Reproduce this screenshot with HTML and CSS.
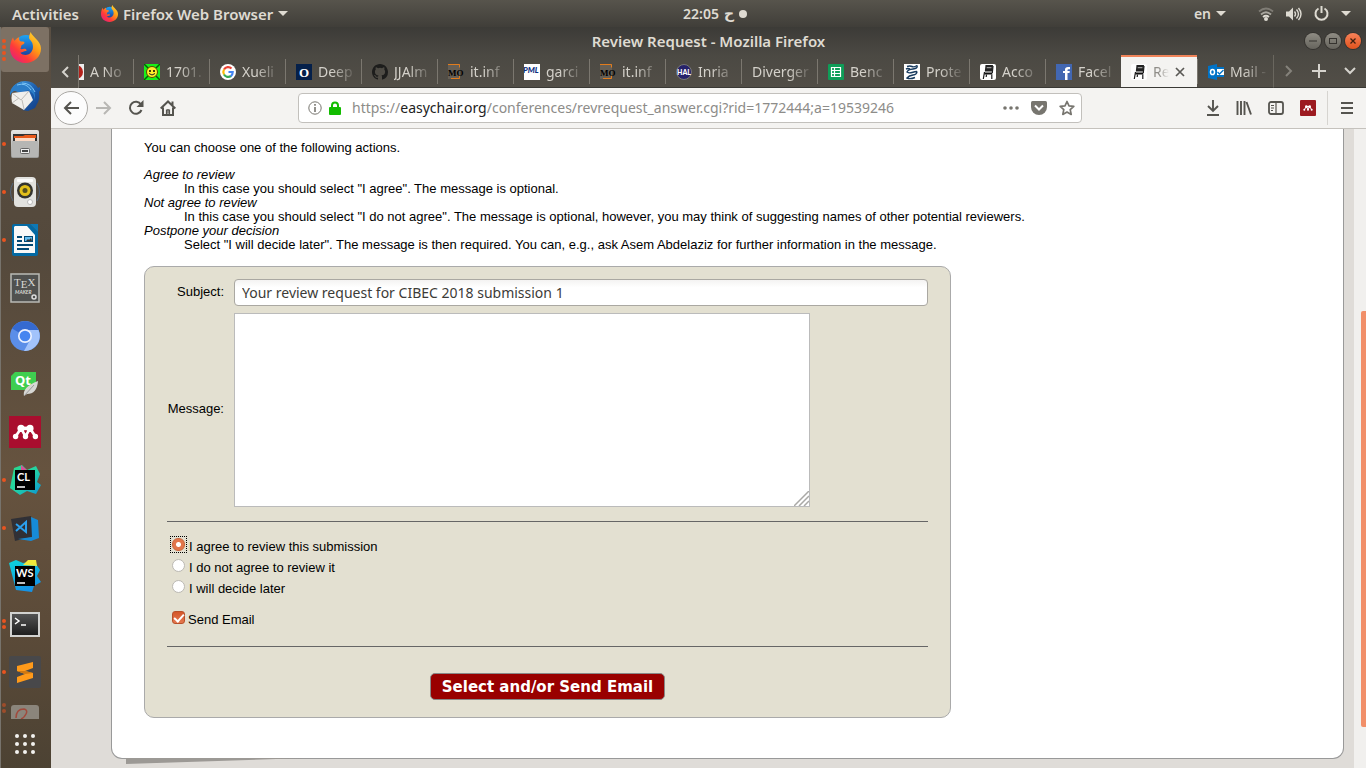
FILE: index.html
```html
<!DOCTYPE html>
<html lang="en">
<head>
<meta charset="utf-8">
<title>Review Request</title>
<link rel="stylesheet" href="styles.css">
</head>
<body>
<svg class="defs" width="0" height="0" aria-hidden="true">
  <defs>
    <linearGradient id="fxFlame" x1="1" y1="0" x2="0.1" y2="1"><stop offset="0" stop-color="#ffe83d"/><stop offset="0.4" stop-color="#ff9a14"/><stop offset="0.7" stop-color="#ff3a3a"/><stop offset="1" stop-color="#e01b84"/></linearGradient>
    <linearGradient id="fxGlobe" x1="0" y1="0" x2="0" y2="1"><stop offset="0" stop-color="#1ea4f5"/><stop offset="1" stop-color="#1a3694"/></linearGradient>
    <linearGradient id="silver" x1="0" y1="0" x2="0" y2="1"><stop offset="0" stop-color="#e6e6e4"/><stop offset="1" stop-color="#9a9a98"/></linearGradient>
    <linearGradient id="dark" x1="0" y1="0" x2="0" y2="1"><stop offset="0" stop-color="#555"/><stop offset="1" stop-color="#1c1c1c"/></linearGradient>
    <linearGradient id="clion" x1="0" y1="0" x2="1" y2="1"><stop offset="0" stop-color="#2bd98b"/><stop offset="0.5" stop-color="#22d3a4"/><stop offset="1" stop-color="#0a90d8"/></linearGradient>
    <linearGradient id="storm" x1="0" y1="0" x2="0.4" y2="1"><stop offset="0" stop-color="#0cd6da"/><stop offset="1" stop-color="#1593e6"/></linearGradient>
    <linearGradient id="bird" x1="0" y1="0" x2="1" y2="1"><stop offset="0" stop-color="#4aa6ea"/><stop offset="0.5" stop-color="#1d5fae"/><stop offset="1" stop-color="#123a80"/></linearGradient>
    <symbol id="firefox" viewBox="0 0 30 30">
      <circle cx="15.500" cy="14" r="11" fill="url(#fxGlobe)"/>
      <path d="M20 0c1 3 3 4 5.500 7 2 2 4.500 5 4.500 9 0 8-6.500 14-15 14S0 24 0 16C0 12 1 8 3 5c0 1 .5 2.500 1.500 3.500C6 6.500 7 5.500 9 5c-.5 1.500 0 3 1 4 1.500.3 3.500.3 4 1 .3 1.500-2 2.500-3 3-.5 1.500 0 2-1 3.500 2 .5 3.500-.8 5.500.2 1 .8.500 1.800-.5 1.800-1.500 0-2.500 1.500-5 1.500 2 2.500 7 3 9.500.5 3.500-3 3-7 2-10-1-2.500-3.500-3.500-3-6C18.600 3 19.500 1.500 20 0z" fill="url(#fxFlame)"/>
    </symbol>
    <symbol id="chair" viewBox="0 0 16 16"><rect width="16" height="16" rx="2" fill="#fff"/><path d="M5.500 1H13l-.7 6.500H4.800z" fill="#222"/><path d="M6.800 3h4.700l-.2 1.300H6.600zM6.400 5.300h4.700" fill="#999"/><path d="M4.300 8.500h8v2h-8z" fill="#111"/><path d="M4.500 8L3.300 15M6.500 10.500l-.3 2.500M11.800 10.500V15M13 2l-.7 7" fill="none" stroke="#1c1c1c" stroke-width="1.200"/></symbol>
    <symbol id="mo" viewBox="0 0 16 16"><rect width="12" height="15" fill="#665f55"/><path d="M0 .5h11.500v3M3 14.500h8.500v-3" fill="none" stroke="#e27c1c"/><text x="0" y="12" font-family="Liberation Serif" font-weight="bold" font-size="9">MO</text></symbol>
    <symbol id="people" viewBox="0 0 30 20"><g stroke="#fff" stroke-width="3" fill="none"><path d="M4 15l6-9 5 9 5-9 6 9"/></g><path d="M10 4h10v4H10z" fill="#fff"/><g fill="#fff"><circle cx="10" cy="6" r="4"/><circle cx="20" cy="6" r="4"/><circle cx="4" cy="15" r="3"/><circle cx="15" cy="15" r="3"/><circle cx="26" cy="15" r="3"/></g></symbol>
  </defs>
</svg>

<header class="topbar">
  <div class="topbar-left">
    <span>Activities</span>
    <span class="app-menu"><svg width="17" height="17"><use href="#firefox"/></svg>Firefox Web Browser<i class="caret"></i></span>
  </div>
  <div class="clock"><span>22:05</span><bdi>ح</bdi><i class="dot"></i></div>
  <div class="tray">
    <span class="lang">en<i class="caret"></i></span>
    <svg width="16" height="14" viewBox="0 0 16 14" fill="none"><g stroke-width="1.800"><path d="M1 4.500q7-6 14 0" stroke="#7f7c75"/><path d="M3 7.500q5-4.500 10 0" stroke="#aaa79f"/><path d="M5 10q3-2.500 6 0" stroke="#dedbd2"/></g><circle cx="8" cy="12" r="2" fill="#dedbd2"/></svg>
    <svg width="16" height="14" viewBox="0 0 16 14" fill="none" stroke="#dedbd2" stroke-width="1.400"><path d="M0 4.500h3l4-4v13l-4-4H0z" fill="#dedbd2" stroke="none"/><path d="M8.500 4.500q2 2.500 0 5M10.500 2.500q4 4.500 0 9M12.500 1q5 6 0 12"/></svg>
    <svg width="15" height="15" viewBox="0 0 15 15" fill="none" stroke="#dedbd2" stroke-width="2"><path d="M4.500 2.500a6 6 0 1 0 6 0M7.500 0v7"/></svg>
    <i class="caret"></i>
  </div>
</header>

<div class="desktop">
  <nav class="dock" aria-label="Dock">
    <button class="app current" aria-label="Firefox"><span class="runs"><i></i><i></i><i></i><i></i></span><svg width="31" height="31"><use href="#firefox"/></svg></button>
    <button class="app" aria-label="Thunderbird"><svg width="32" height="32" viewBox="0 0 32 32"><path d="M3 9Q7 1 16 1q9 0 13 7l2-1q1 3-1 5 1 8-2 12l-2 4-7 3-6-1q8-4 9-11z" fill="url(#bird)"/><path d="M3 13l17-2 4 9-9 10-12-7q-1-6 0-10z" fill="#f0efec"/><path d="M3 13l9 7 8-9M3 23l7-5M15 29l-2-9" fill="none" stroke="#bdbbb7"/><path d="M1 17Q0 8 7 4q8-4 14 1 6 5 5 15-1-8-7-10-7 2-14 1-4 2-4 6z" fill="#2b7dc8"/><path d="M8 5q9-3 14 5M13 3q9 0 13 9" fill="none" stroke="#7cc4f5"/></svg></button>
    <button class="app" aria-label="Files"><span class="runs"><i></i></span><svg width="28" height="30" viewBox="0 0 28 30"><rect x="0" y="1" width="28" height="28" rx="2" fill="url(#silver)"/><path d="M2 5h24v7H2z" fill="#333"/><path d="M3 7h9l2-1h11v3H3z" fill="#e8591b"/><path d="M4 9h20v3H4z" fill="#fbd9c4"/><path d="M1 12h26v16H1z" fill="#b6b6b4"/><rect x="9.500" y="19.500" width="9" height="5" rx="1" fill="#eee" stroke="#666"/><path d="M11 22h6" stroke="#444" stroke-width="2"/></svg></button>
    <button class="app" aria-label="Rhythmbox"><span class="runs"><i></i></span><svg width="32" height="32" viewBox="0 0 32 32"><g fill="none" stroke="#52657c"><path d="M4 7q-5 9 0 18M28 7q5 9 0 18"/></g><rect x="5" y="1" width="22" height="30" rx="4" fill="#e2e2df"/><rect x="8" y="3" width="16" height="3" rx="1" fill="#fafafa"/><circle cx="16" cy="14.500" r="8" fill="#34342f"/><circle cx="16" cy="14.500" r="5.500" fill="#e2bf1a"/><circle cx="16" cy="14.500" r="2.500" fill="#55501f"/><circle cx="21" cy="26" r="2.500" fill="#fff" stroke="#bbb"/></svg></button>
    <button class="app" aria-label="Writer"><span class="runs"><i></i></span><svg width="26" height="32" viewBox="0 0 26 32"><path d="M2 0h16l8 8v22q0 2-2 2H2q-2 0-2-2V2q0-2 2-2z" fill="#0369a3"/><path d="M3 2h12l8 9v18H2V3z" fill="#f8f8f8"/><path d="M18 0h8v8z" fill="#0d78b5"/><path d="M5 13h5M5 17h5M5 21h16M5 25h12" stroke="#024873" stroke-width="2"/><rect x="12.500" y="12.500" width="8" height="5" fill="#63bbee" stroke="#024873"/><path d="M14 17l2-2 1 1 2-2 1 3z" fill="#333"/></svg></button>
    <button class="app" aria-label="Texmaker"><svg width="30" height="30" viewBox="0 0 30 30"><rect x="1" y="1" width="28" height="28" fill="#50514f" stroke="#b9bab5" stroke-width="1.500"/><g fill="#d8d8d4"><text x="4" y="13" font-family="Liberation Serif" font-size="11">T<tspan dy="2">E</tspan><tspan dy="-2">X</tspan></text><text x="5" y="21" font-family="Lato" font-weight="bold" font-style="italic" font-size="5">MAKER</text></g><circle cx="24" cy="24" r="2" fill="none" stroke="#ddd" stroke-width="1.500"/></svg></button>
    <button class="app" aria-label="Chromium"><svg width="30" height="30" viewBox="0 0 30 30"><circle cx="15" cy="15" r="15" fill="#5b8ee8"/><path d="M15 15L2 7.500A15 15 0 0 1 28.500 9H15z" fill="#356ad0"/><path d="M15 9h13.500A15 15 0 0 1 14 30l6-11z" fill="#a2c3fb"/><circle cx="15" cy="15" r="6.200" fill="#4585f0" stroke="#e9f0ff" stroke-width="1.700"/></svg></button>
    <button class="app" aria-label="Qt Creator"><svg width="28" height="25" viewBox="0 0 28 25"><path d="M4 0h21v15l-3 3H0V4z" fill="#3fce50"/><text x="4" y="13" fill="#fff" font-family="Noto Sans" font-weight="bold" font-size="13">Qt</text><path d="M13 24q-2-9 14-15-1 13-11 13z" fill="#d7d7d4"/><path d="M13 24l10-11" stroke="#999"/></svg></button>
    <button class="app" aria-label="Mendeley"><svg width="32" height="32" viewBox="0 0 32 32"><rect width="32" height="32" fill="#a90e2e"/><svg x="3" y="7" width="27" height="18"><use href="#people"/></svg></svg></button>
    <button class="app" aria-label="CLion"><span class="runs"><i></i></span><svg width="32" height="32" viewBox="0 0 32 32"><path d="M5 4l8-3 5 5 9-4 4 8-3 8 4 3-5 9-9-3-7 4-10-7z" fill="url(#clion)"/><path d="M12 1l6 5-6 3z" fill="#d94f96"/><rect x="6" y="6" width="20" height="20"/><text x="8" y="17" fill="#fff" font-family="Lato" font-weight="bold" font-size="11">CL</text><path d="M8 23h8" stroke="#fff" stroke-width="1.500"/></svg></button>
    <button class="app" aria-label="Visual Studio Code"><span class="runs"><i></i></span><svg width="28" height="26" viewBox="0 0 28 26"><path d="M0 4l20-3 4 20-20 5z" fill="#303036"/><path d="M20 2l7 3 1 18-8 3-13-2 14-2z" fill="#168bd8"/><path d="M5 9l10 8V7L5 16" fill="none" stroke="#2ba0ee" stroke-width="2"/></svg></button>
    <button class="app" aria-label="WebStorm"><svg width="32" height="32" viewBox="0 0 32 32"><path d="M0 3l7-3 7 3 11-2 6 9-3 6 4 6-7 4-2 6-16-2z" fill="url(#storm)"/><path d="M14 5l5-5h8l1 6z" fill="#f1e83b"/><rect x="6" y="6" width="20" height="20"/><text x="7" y="17" fill="#fff" font-family="Lato" font-weight="bold" font-size="11">WS</text><path d="M8 23h8" stroke="#fff" stroke-width="1.500"/></svg></button>
    <button class="app" aria-label="Terminal"><span class="runs"><i></i><i></i></span><svg width="30" height="25" viewBox="0 0 30 25"><rect x="1" y="1" width="28" height="23" fill="url(#dark)" stroke="#d2d2d0" stroke-width="2"/><path d="M5 6l4 3-4 3M11 13h5" fill="none" stroke="#fff" stroke-width="1.500"/></svg></button>
    <button class="app" aria-label="Sublime Text"><span class="runs"><i></i></span><svg width="32" height="32" viewBox="0 0 32 32"><rect width="32" height="32" rx="2" fill="#48484a"/><path d="M24 6v6l-8 3 8 2v5L8 27v-6l8-3-8-3v-5z" fill="#ff9a1a"/><path d="M8 15l8 3 8-1-8-2z" fill="#cf7811"/></svg></button>
    <button class="app clipped" aria-label="Disk tool"><span class="runs"><i></i><i></i></span><svg width="28" height="14" viewBox="0 0 28 14"><path d="M0 14V3q0-3 3-3h22q3 0 3 3v11z" fill="#8b857b"/><path d="M5 13q0-9 8-9 4 1 2 5-2 4-5 5" fill="none" stroke="#a14a3c" stroke-width="1.500"/></svg></button>
    <button class="app all-apps" aria-label="Show applications"><svg width="20" height="20" viewBox="0 0 20 20" fill="#f3f2ef"><circle cx="2" cy="2" r="2"/><circle cx="10" cy="2" r="2"/><circle cx="18" cy="2" r="2"/><circle cx="2" cy="10" r="2"/><circle cx="10" cy="10" r="2"/><circle cx="18" cy="10" r="2"/><circle cx="2" cy="18" r="2"/><circle cx="10" cy="18" r="2"/><circle cx="18" cy="18" r="2"/></svg></button>
  </nav>

  <section class="window">
    <div class="titlebar">
      <h1>Review Request - Mozilla Firefox</h1>
      <div class="window-buttons">
        <button aria-label="Minimize"><svg width="8" height="8"><path d="M0 4h8" stroke="#35332f"/></svg></button>
        <button aria-label="Maximize"><svg width="8" height="8"><rect x=".5" y="1.500" width="7" height="5" fill="none" stroke="#35332f"/></svg></button>
        <button class="close" aria-label="Close"><svg width="8" height="8"><path d="M1.500 1.500l5 5M6.500 1.500l-5 5" stroke="#40200f" stroke-width="1.300"/></svg></button>
      </div>
    </div>

    <div class="tabbar">
      <button class="scroll-left" aria-label="Scroll tabs left"><svg width="8" height="12" viewBox="0 0 8 12"><path d="M7 1L2 6l5 5" fill="none" stroke="#d5d3cd" stroke-width="2"/></svg></button>
      <div class="tabs" role="tablist">
        <button class="tab" role="tab"><svg width="16" height="16"><rect width="16" height="16" fill="#eee"/><circle cx="8" cy="8" r="7" fill="#b5221c"/></svg><span>A No</span></button>
        <button class="tab" role="tab"><svg width="16" height="16"><rect width="16" height="16" fill="#18f018"/><path d="M0 0l16 16M16 0L0 16" stroke="#0a5a0a" stroke-width="1.500"/><circle cx="8" cy="8" r="5.500" fill="#ffed2a" stroke="#554d00"/><circle cx="6" cy="7" r="1"/><circle cx="10" cy="7" r="1"/><path d="M5 9.500q3 3 6 0" fill="none" stroke="#222"/></svg><span>1701.</span></button>
        <button class="tab" role="tab"><svg width="16" height="16" viewBox="0 0 16 16" fill="none" stroke-width="2.200"><circle cx="8" cy="8" r="8" fill="#fff" stroke="none"/><path d="M4 5.500a4.800 4.800 0 0 1 7.500-1" stroke="#ea4335"/><path d="M4 5.500a5 5 0 0 0 0 5" stroke="#fbbc05"/><path d="M4 10.500a4.800 4.800 0 0 0 7 1.500" stroke="#34a853"/><path d="M8.500 8h4.200q0 3-2 4.200" stroke="#4285f4"/></svg><span>Xueli</span></button>
        <button class="tab" role="tab"><svg width="16" height="16"><rect width="16" height="16" fill="#05204a"/><text x="3" y="12.500" fill="#fff" font-family="Liberation Serif" font-weight="bold" font-size="13">O</text></svg><span>Deep</span></button>
        <button class="tab" role="tab"><svg width="16" height="16" viewBox="0 0 16 16"><path fill="#1d1d1c" d="M8 0C3.580 0 0 3.580 0 8c0 3.540 2.290 6.530 5.470 7.590.4.070.55-.17.55-.38 0-.19-.01-.82-.01-1.490-2.010.37-2.530-.49-2.690-.94-.09-.23-.48-.94-.82-1.130-.28-.15-.68-.52-.01-.53.63-.01 1.080.58 1.230.82.72 1.210 1.870.87 2.330.66.07-.52.28-.87.51-1.070-1.780-.2-3.640-.89-3.640-3.950 0-.87.31-1.590.82-2.150-.08-.2-.36-1.020.08-2.120 0 0 .67-.21 2.200.82a7.600 7.600 0 0 1 4 0c1.530-1.040 2.200-.82 2.200-.82.44 1.100.16 1.920.08 2.120.51.56.82 1.270.82 2.150 0 3.070-1.870 3.750-3.650 3.950.29.25.54.73.54 1.480 0 1.070-.01 1.930-.01 2.200 0 .21.15.46.55.38A8.010 8.010 0 0 0 16 8c0-4.420-3.580-8-8-8z"/></svg><span>JJAlm</span></button>
        <button class="tab" role="tab"><svg width="16" height="16"><use href="#mo"/></svg><span>it.inf</span></button>
        <button class="tab" role="tab"><svg width="16" height="16"><rect width="16" height="16" fill="#fff"/><text x="-1" y="9" fill="#0a2d80" font-family="Lato" font-weight="900" font-style="italic" font-size="8">PML</text></svg><span>garci</span></button>
        <button class="tab" role="tab"><svg width="16" height="16"><use href="#mo"/></svg><span>it.inf</span></button>
        <button class="tab" role="tab"><svg width="16" height="16"><circle cx="8" cy="8" r="7.500" fill="#27236b" stroke="#777"/><text x="1" y="11" fill="#fff" font-family="Lato" font-weight="900" font-size="7">HAL</text></svg><span>Inria</span></button>
        <button class="tab" role="tab"><span class="wide">Diverger</span></button>
        <button class="tab" role="tab"><svg width="16" height="16"><rect width="16" height="16" rx="1" fill="#0f9d58"/><path d="M3.500 3.500h9v9h-9zM3.500 6.500h9M3.500 9.500h9M6.500 3.500v9" fill="none" stroke="#fff" stroke-width="1.200"/></svg><span>Benc</span></button>
        <button class="tab" role="tab"><svg width="16" height="16"><rect width="16" height="16" fill="#fff"/><path d="M3 2.500q3-1 5 0t5-1M13 1.500q1 3-4 3.500T3 8q2 1.500 5 .5t5-1M13 7.500q0 3-4 3.500t-6 3q3 1.500 8-.5M2 5q2-1 4 0" fill="none" stroke="#173a5e" stroke-width="1.400"/></svg><span>Prote</span></button>
        <button class="tab" role="tab"><svg width="16" height="16"><use href="#chair"/></svg><span>Acco</span></button>
        <button class="tab" role="tab"><svg width="16" height="16"><rect width="16" height="16" fill="#4267b2"/><path d="M9 16V9H7V7h2V5.500Q9 3 12 3h2v2.300h-1.500Q11.500 5.300 11.500 6v1h2.300L13.500 9h-2v7z" fill="#fff"/></svg><span>Facel</span></button>
        <button class="tab active" role="tab" aria-selected="true"><svg width="16" height="16"><use href="#chair"/></svg><span>Re</span><svg width="10" height="10"><path d="M1 1l8 8M9 1L1 9" stroke="#5a5955" stroke-width="1.700"/></svg></button>
        <button class="tab" role="tab"><svg width="16" height="16"><rect x="6" y="4" width="10" height="8" fill="#fff"/><path d="M0 2l9-2v16l-9-2z" fill="#0072c6"/><path d="M9 3h7v2H9zM9 11h7v2H9z" fill="#0072c6"/><path d="M9.500 8l2 2 4-4" fill="none" stroke="#0072c6" stroke-width="1.300"/><ellipse cx="4.500" cy="8" rx="2" ry="2.600" fill="none" stroke="#fff" stroke-width="1.500"/></svg><span>Mail -</span></button>
      </div>
      <div class="tab-tools">
        <button aria-label="Scroll tabs right"><svg width="8" height="12"><path d="M1 1l5 5-5 5" fill="none" stroke="#85827b" stroke-width="2"/></svg></button>
        <button aria-label="New tab"><svg width="14" height="14"><path d="M7 0v14M0 7h14" stroke="#d5d3cd" stroke-width="2"/></svg></button>
        <button aria-label="List tabs"><svg width="12" height="8"><path d="M1 1l5 5 5-5" fill="none" stroke="#d5d3cd" stroke-width="2"/></svg></button>
      </div>
    </div>

    <div class="navbar">
      <div class="nav-buttons">
        <button class="back" aria-label="Back"><svg width="16" height="14"><path d="M8 1L2 7l6 6M2 7h14" fill="none" stroke="#55544f" stroke-width="2"/></svg></button>
        <button aria-label="Forward"><svg width="16" height="14"><path d="M8 1l6 6-6 6M14 7H0" fill="none" stroke="#b8b7b4" stroke-width="2"/></svg></button>
        <button aria-label="Reload"><svg width="16" height="16"><path d="M13 4.500A6 6 0 1 0 13.500 10" fill="none" stroke="#55544f" stroke-width="2"/><path d="M15.500 0v7h-7z" fill="#55544f"/></svg></button>
        <button aria-label="Home"><svg width="16" height="16" fill="none" stroke="#55544f" stroke-width="2"><path d="M.7 8.500L8 1.500l7.300 7M3 7.500V15h10V7.500M12.500 5V1.500"/><path d="M8 9v4M6.500 10v4h3v-4z" stroke-width="1.200"/></svg></button>
      </div>
      <div class="urlbar">
        <svg width="14" height="14" fill="none" stroke="#77756f"><circle cx="7" cy="7" r="6.200"/><path d="M7 6v5M7 3v1.700" stroke-width="1.600"/></svg>
        <svg width="12" height="14"><path d="M3 7V4.500a3 3 0 0 1 6 0V7" fill="none" stroke="#12bc00" stroke-width="2"/><rect y="6" width="12" height="8" rx="1" fill="#12bc00"/></svg>
        <div class="url">https://<b>easychair.org</b>/conferences/revrequest_answer.cgi?rid=1772444;a=19539246</div>
        <div class="url-tools">
          <svg width="16" height="4" fill="#77756f"><circle cx="2" cy="2" r="1.800"/><circle cx="8" cy="2" r="1.800"/><circle cx="14" cy="2" r="1.800"/></svg>
          <svg width="16" height="14"><path d="M1.500 0h13Q16 0 16 1.500V6a8 8 0 0 1-16 0V1.500Q0 0 1.500 0z" fill="#77756f"/><path d="M4 4.500l4 4 4-4" fill="none" stroke="#fff" stroke-width="2"/></svg>
          <svg width="16" height="16"><path d="M8 1.500l2 4.400 4.800.5-3.600 3.200 1 4.800L8 12l-4.200 2.400 1-4.800L1.200 6.400 6 5.900z" fill="none" stroke="#77756f" stroke-width="1.700" stroke-linejoin="round"/></svg>
        </div>
      </div>
      <div class="nav-tools">
        <button aria-label="Downloads"><svg width="14" height="16"><path d="M7 0v11M2 6l5 5 5-5M1 15h12" fill="none" stroke="#55544f" stroke-width="1.900"/></svg></button>
        <button aria-label="Library"><svg width="16" height="14"><path d="M1.500 0v14M5 0v14M8.500 0v14M10.500 1l4.500 12.500" stroke="#55544f" stroke-width="1.900"/></svg></button>
        <button aria-label="Sidebars"><svg width="16" height="14"><rect x="1" y="1" width="14" height="12" rx="2" fill="none" stroke="#55544f" stroke-width="1.800"/><path d="M8 1v12M3 4.500h3M3 7h3M3 9.500h2" stroke="#55544f" stroke-width="1.200"/></svg></button>
        <button aria-label="Mendeley"><svg width="16" height="16"><rect width="16" height="16" rx="1" fill="#9c1a20"/><svg x="3" y="4" width="10" height="8"><use href="#people"/></svg></svg></button>
        <button class="menu" aria-label="Menu"><svg width="12" height="12"><path d="M0 1h12M0 6h12M0 11h12" stroke="#55544f" stroke-width="2"/></svg></button>
      </div>
    </div>

    <div class="viewport">
      <div class="backdrop">
        <main class="page">
          <p>You can choose one of the following actions.</p>
          <dl>
            <dt>Agree to review</dt>
            <dd>In this case you should select "I agree". The message is optional.</dd>
            <dt>Not agree to review</dt>
            <dd>In this case you should select "I do not agree". The message is optional, however, you may think of suggesting names of other potential reviewers.</dd>
            <dt>Postpone your decision</dt>
            <dd>Select "I will decide later". The message is then required. You can, e.g., ask Asem Abdelaziz for further information in the message.</dd>
          </dl>
          <form class="answer">
            <div class="field"><label for="subject">Subject:</label><input id="subject" type="text" value="Your review request for CIBEC 2018 submission 1"></div>
            <div class="field"><label for="message">Message:</label>
              <div class="area"><textarea id="message"></textarea><svg class="grip" width="15" height="15"><path d="M0 15L15 0M5 15L15 5M10 15l5-5" stroke="#aaa9a6" stroke-width="1.500"/></svg></div></div>
            <hr>
            <div class="choices">
              <label><input type="radio" name="answer" checked>I agree to review this submission</label>
              <label><input type="radio" name="answer">I do not agree to review it</label>
              <label><input type="radio" name="answer">I will decide later</label>
              <label class="send"><input type="checkbox" checked>Send Email</label>
            </div>
            <hr>
            <button class="submit" type="button">Select and/or Send Email</button>
          </form>
        </main>
      </div>
      <div class="scrollbar"><div class="thumb"></div></div>
    </div>
  </section>
</div>
</body>
</html>
```
FILE: styles.css
```css
* { box-sizing: border-box; }
html, body { height: 100%; margin: 0; }
body {
  display: flex;
  flex-direction: column;
  overflow: hidden;
  font: 14px/20px "Noto Sans", "Open Sans", sans-serif;
  color: #3c3b37;
}
button { padding: 0; border: 0; background: none; font: inherit; color: inherit; }
svg { display: block; flex: none; }
.defs { position: absolute; }

/* system bar */
.topbar {
  flex: none;
  display: flex;
  height: 27px;
  align-items: center;
  background: linear-gradient(#57544c, #403e39);
  color: #dfdbd2;
  font-size: 15px;
  font-weight: 600;
}
.topbar-left { display: flex; width: 50%; padding-left: 12px; gap: 22px; }
.app-menu, .lang, .clock { display: flex; align-items: center; gap: 5px; }
.clock { flex: 1; font-size: 14px; }
.clock bdi { font-family: "DejaVu Sans", sans-serif; }
.dot { width: 8px; height: 8px; border-radius: 50%; background: #dfdbd2; }
.caret { border: 5px solid transparent; border-top-color: #dfdbd2; border-bottom: 0; }
.tray { display: flex; align-items: center; gap: 12px; padding-right: 15px; }
.lang { margin-right: 20px; font-size: 14px; }

.desktop { flex: 1; display: flex; min-height: 0; }

/* dock */
.dock {
  flex: none;
  display: flex;
  flex-direction: column;
  width: 51px;
  border-left: 1px solid #77736c;
  background: linear-gradient(#5a4f43, #54493c 30%, #66533f 60%, #5c4b39 80%, #4c4233);
}
.app {
  position: relative;
  flex: none;
  display: flex;
  height: 48px;
  align-items: center;
  justify-content: center;
  padding-right: 2px;
}
.current { height: 45px; border-radius: 3px; background: #7d7164; margin-right: 2px; padding: 0 0 4px; }
.clipped { height: 24px; align-items: flex-end; padding-bottom: 1px; }
.all-apps { margin-top: auto; }
.runs { position: absolute; left: 1px; top: 0; bottom: 0; display: flex; flex-direction: column; justify-content: center; gap: 2px; }
.runs i { width: 4px; height: 4px; border-radius: 50%; background: #e95420; }
.clipped .runs { opacity: 0.5; }

/* browser frame */
.window { flex: 1; display: flex; flex-direction: column; min-width: 0; }
.titlebar {
  flex: none;
  display: grid;
  grid-template-columns: 1fr auto 1fr;
  height: 28px;
  align-items: center;
  background: linear-gradient(#3c3b37, #4b4943);
  color: #dfdbd2;
}
h1 { grid-column: 2; margin: 0; font-size: 15px; font-weight: 600; }
.window-buttons { display: flex; gap: 4px; justify-content: flex-end; padding-right: 5px; }
.window-buttons button {
  display: grid;
  place-items: center;
  width: 16px;
  height: 16px;
  border-radius: 50%;
  background: linear-gradient(#8f8c84, #66645d);
  box-shadow: 0 0 0 1px #35332f;
}
.window-buttons .close { background: linear-gradient(#f78259, #e2531d); }

.tabbar { flex: none; display: flex; height: 33px; background: linear-gradient(#4b4943, #524e47); }
.scroll-left { flex: none; display: grid; place-items: center; width: 28px; border-right: 1px solid #7b776f; }
.tabs { flex: 1; display: flex; justify-content: flex-end; min-width: 0; overflow: hidden; border-bottom: 1px solid #3a3935; }
.tab {
  flex: none;
  display: flex;
  width: 76px;
  align-items: center;
  gap: 6px;
  padding: 1px 4px 0 10px;
  color: #d4d1ca;
  border-left: 1px solid transparent;
  border-image: linear-gradient(transparent 15%, #7b776f 15% 88%, transparent 88%) 1;
}
.tab span {
  flex: 1;
  overflow: hidden;
  white-space: nowrap;
  text-align: left;
  mask-image: linear-gradient(to right, #000 35%, transparent);
}
.tab .wide { mask-image: linear-gradient(to right, #000 60%, transparent); }
.tab.active { border: 0; border-top: 2px solid #f0845a; border-image: none; background: #f4f3f1; color: #8f8d88; padding: 0 12px 0 10px; }
.tab-tools { flex: none; display: flex; width: 93px; align-items: center; justify-content: space-between; padding: 0 10px 0 11px; border-bottom: 1px solid #3a3935; border-left: 1px solid #6a675f; }

.navbar {
  flex: none;
  display: flex;
  height: 41px;
  align-items: center;
  border-bottom: 1px solid #c5c2bd;
  background: #f4f3f1;
}
.nav-buttons { flex: none; display: flex; align-items: center; gap: 16px; width: 247px; padding-left: 3px; }
.back { display: grid; place-items: center; width: 34px; height: 34px; margin-right: -8px; border: 1px solid #aaa8a4; border-radius: 50%; background: #fcfcfc; }
.urlbar {
  flex: 1;
  display: flex;
  min-width: 0;
  max-width: 784px;
  height: 30px;
  align-items: center;
  gap: 7px;
  padding: 0 6px 0 9px;
  border: 1px solid #c2c0bc;
  border-radius: 4px;
  background: #fff;
}
.url { flex: 1; overflow: hidden; white-space: nowrap; padding-left: 4px; color: #8d8c89; }
.url b { font-weight: 400; color: #222; }
.url-tools { display: flex; align-items: center; gap: 12px; }
.nav-tools { display: flex; align-items: center; gap: 16px; margin-left: auto; }
.menu { display: grid; place-items: center; height: 34px; width: 39px; margin-left: -5px; border-left: 1px solid #d6d4d0; }

/* page */
.viewport { flex: 1; display: flex; min-height: 0; }
.backdrop { flex: 1; padding: 0 10px 0 60px; background: #dfdcd8; overflow: hidden; }
.page {
  position: relative;
  padding: 12px 32px 40px;
  border: 1px solid #999;
  border-top: 0;
  border-radius: 0 0 11px 11px;
  background: #fff;
  color: #000;
  font: 13px/14px "Liberation Sans", Arial, sans-serif;
}
.page::after {
  content: "";
  position: absolute;
  left: 14px;
  top: 100%;
  width: 180px;
  height: 6px;
  background: #9c9995;
  clip-path: polygon(0 0, 100% 0, 0 100%);
}
.page p { margin: 0 0 13px; }
dl { margin: 0 0 14px; }
dt { font-style: italic; }
dd { margin: 0 0 0 40px; }
.answer {
  display: flex;
  flex-direction: column;
  max-width: 807px;
  padding: 12px 22px 17px;
  border: 1px solid #aaa;
  border-radius: 10px;
  background: #e3e0d1;
}
.field { display: grid; grid-template-columns: 57px 1fr; align-items: center; gap: 10px; margin-bottom: 7px; }
.field label { text-align: right; padding-bottom: 2px; }
.field input {
  width: 100%;
  height: 27px;
  padding: 0 7px;
  border: 1px solid #aaa8a2;
  border-radius: 4px;
  background: linear-gradient(#f4f3f2, #fff 30%);
  font: 14px/20px "Noto Sans", sans-serif;
  color: #3c3b37;
}
.area { position: relative; max-width: 576px; }
textarea { display: block; width: 100%; height: 194px; border: 1px solid #bbb; background: #fff; resize: none; }
.grip { position: absolute; right: 1px; bottom: 1px; }
hr { width: 100%; height: 1px; margin: 7px 0 0; border: 0; background: #666; }
.choices { display: flex; flex-direction: column; padding: 14px 0 9px 5px; }
.choices label { display: flex; height: 21px; align-items: center; gap: 4px; }
.choices input {
  appearance: none;
  width: 13px;
  height: 13px;
  margin: 0 0 4px;
  border: 1px solid #bbb9b3;
  border-radius: 50%;
  background: #fff;
}
.choices input[type="radio"]:checked {
  border: 1px solid #c9683f;
  border-radius: 6px;
  background: radial-gradient(circle, #fff 2px, #e2764c 3px);
}
.choices label:has([type="radio"]:checked) { background: none; }
.choices input[type="checkbox"] {
  display: grid;
  place-items: center;
  border: 1px solid #b8502a;
  border-radius: 3px;
  background: linear-gradient(#d4572a, #e4784f);
}
.choices input[type="checkbox"]::after { content: ""; width: 4px; height: 8px; margin-bottom: 2px; border: solid #fff; border-width: 0 2px 2px 0; transform: rotate(42deg); }
.choices input[type="radio"]:checked { position: relative; }
.choices input[type="radio"]:checked::before { content: ""; position: absolute; inset: -3px; border: 1px dotted #000; }
.choices .send { margin-top: 10px; gap: 3px; }
.submit {
  align-self: center;
  height: 27px;
  margin-top: 26px;
  padding: 0 11px;
  border: 1px solid #888;
  border-radius: 5px;
  background: #990000;
  color: #fff;
  font: bold 15px/20px "DejaVu Sans", Verdana, sans-serif;
}
.scrollbar { flex: none; width: 12px; padding: 182px 0 41px 7px; background: #f1f0ee; }
.thumb { height: 100%; border-radius: 2px 0 0 2px; background: #f18f69; }
```
